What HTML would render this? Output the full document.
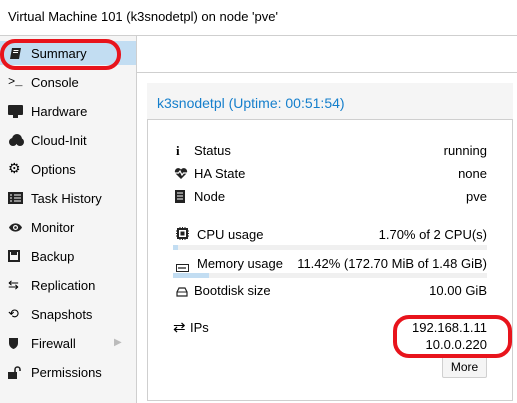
<!DOCTYPE html><html><head><style>
body{margin:0;width:517px;height:403px;overflow:hidden;background:#fff;font-family:"Liberation Sans",Arial,sans-serif;font-size:13px;color:#000;position:relative}
.a{position:absolute;white-space:nowrap}
.side{position:absolute;left:0;top:36px;width:136px;height:367px;background:#f5f5f5;border-right:1px solid #cfcfcf}
</style></head><body>
<div class="a" style="left:8px;top:9px;font-size:13px">Virtual Machine 101 (k3snodetpl) on node 'pve'</div>
<div class="a" style="left:0;top:35px;width:517px;height:1px;background:#cfcfcf"></div>
<div class="side">
<div class="a" style="left:0;top:5px;width:136px;height:24px;background:#c2ddf2"></div>
</div>
<div class="a" style="left:137px;top:72px;width:380px;height:1px;background:#cfcfcf"></div>
<div class="a" style="left:9px;top:47px;width:13px;height:13px"><svg width="13" height="13"><path d="M3 1h9l-2 11H1z" fill="#222"/><path d="M4.5 3.5h5M4 5.5h5" stroke="#fff"/></svg></div>
<div class="a" style="left:31px;top:46px">Summary</div>
<div class="a" style="left:8px;top:75px;font-size:12px;font-family:'Liberation Mono',monospace">&gt;_</div><div class="a" style="left:31px;top:75px">Console</div>
<div class="a" style="left:8px;top:105px;width:15px;height:12px"><svg width="15" height="13"><rect x="0" y="0" width="15" height="10" rx="1" fill="#222"/><rect x="5" y="10" width="5" height="3" fill="#222"/></svg></div><div class="a" style="left:31px;top:104px">Hardware</div>
<div class="a" style="left:8px;top:134px"><svg width="16" height="12"><circle cx="5" cy="8" r="4" fill="#222"/><circle cx="9" cy="5" r="5" fill="#222"/><circle cx="12" cy="8" r="4" fill="#222"/></svg></div><div class="a" style="left:31px;top:133px">Cloud-Init</div>
<div class="a" style="left:8px;top:160px;font-size:14px">⚙</div><div class="a" style="left:31px;top:162px">Options</div>
<div class="a" style="left:8px;top:192px"><svg width="15" height="12"><rect width="15" height="12" fill="#222"/><path d="M2 3h2M6 3h7M2 6h2M6 6h7M2 9h2M6 9h7" stroke="#fff"/></svg></div><div class="a" style="left:31px;top:191px">Task History</div>
<div class="a" style="left:8px;top:221px"><svg width="15" height="11"><path d="M1 5.5C4 0 11 0 14 5.5C11 11 4 11 1 5.5z" fill="#222"/><circle cx="7.5" cy="5.5" r="2.5" fill="#fff"/><circle cx="7.5" cy="5.5" r="1.3" fill="#222"/></svg></div><div class="a" style="left:31px;top:220px">Monitor</div>
<div class="a" style="left:8px;top:250px"><svg width="12" height="12"><rect x="1" y="1" width="10" height="10" fill="none" stroke="#222" stroke-width="2"/><rect x="3" y="1" width="6" height="4" fill="#222"/></svg></div><div class="a" style="left:31px;top:249px">Backup</div>
<div class="a" style="left:8px;top:277px;font-size:13px">⇆</div><div class="a" style="left:31px;top:278px">Replication</div>
<div class="a" style="left:8px;top:306px;font-size:13px">⟲</div><div class="a" style="left:31px;top:307px">Snapshots</div>
<div class="a" style="left:8px;top:337px"><svg width="11" height="13"><path d="M1 1h9v5c0 3-2 5-4.5 6C3 11 1 9 1 6z" fill="#222"/></svg></div><div class="a" style="left:31px;top:336px">Firewall</div>
<div class="a" style="left:114px;top:337px;color:#bbb;font-size:10px">▶</div>
<div class="a" style="left:8px;top:366px"><svg width="13" height="13"><rect x="0" y="6" width="9" height="7" fill="#222"/><path d="M7 6V3.5a2.5 2.5 0 0 1 5 0V5" fill="none" stroke="#222" stroke-width="1.6"/></svg></div><div class="a" style="left:31px;top:365px">Permissions</div>
<div class="a" style="left:0;top:39px;width:113px;height:23px;border:4px solid #e8141c;border-radius:15px"></div>

<div class="a" style="left:147px;top:83px;width:366px;height:37px;background:#f5f5f5"></div>
<div class="a" style="left:157px;top:95px;color:#157fcc;font-size:14px">k3snodetpl (Uptime: 00:51:54)</div>
<div class="a" style="left:147px;top:119px;width:364px;height:280px;border:1px solid #cfcfcf"></div>
<div class="a" style="left:176px;top:143px;font-weight:bold;font-family:'Liberation Serif',serif">i</div><div class="a" style="left:194px;top:143px">Status</div><div class="a" style="right:30px;top:143px">running</div>
<div class="a" style="left:174px;top:167px"><svg width="14" height="12"><path d="M7 12L1.5 6.5A3.2 3.2 0 0 1 7 2.5A3.2 3.2 0 0 1 12.5 6.5z" fill="#222"/><path d="M1 6h3.5l1.5-2 2 4 1.5-2H13" fill="none" stroke="#fff" stroke-width="1.2"/></svg></div><div class="a" style="left:194px;top:166px">HA State</div><div class="a" style="right:30px;top:166px">none</div>
<div class="a" style="left:175px;top:190px"><svg width="10" height="13"><rect width="10" height="13" fill="#222"/><path d="M2 3h6M2 6h6M2 9h6" stroke="#fff"/></svg></div><div class="a" style="left:194px;top:189px">Node</div><div class="a" style="right:30px;top:189px">pve</div>
<div class="a" style="left:176px;top:227px"><svg width="13" height="13"><rect x="2" y="2" width="9" height="9" fill="none" stroke="#222" stroke-width="2"/><rect x="4.5" y="4.5" width="4" height="4" fill="#222"/><path d="M4 0v2M6.5 0v2M9 0v2M4 11v2M6.5 11v2M9 11v2M0 4h2M0 6.5h2M0 9h2M11 4h2M11 6.5h2M11 9h2" stroke="#222"/></svg></div><div class="a" style="left:197px;top:227px">CPU usage</div><div class="a" style="right:30px;top:227px">1.70% of 2 CPU(s)</div>
<div class="a" style="left:173px;top:245px;width:314px;height:5px;background:#f0f0f0"></div><div class="a" style="left:173px;top:245px;width:5px;height:5px;background:#c2ddf2"></div>
<div class="a" style="left:176px;top:260px"><svg width="13" height="8"><rect x="0.5" y="0.5" width="12" height="7" fill="none" stroke="#222"/><path d="M3 3v2M5 3v2M7 3v2M9 3v2" stroke="#222" stroke-width="1.3"/></svg></div><div class="a" style="left:197px;top:256px">Memory usage</div><div class="a" style="right:30px;top:256px">11.42% (172.70 MiB of 1.48 GiB)</div>
<div class="a" style="left:173px;top:273px;width:314px;height:5px;background:#f0f0f0"></div><div class="a" style="left:173px;top:273px;width:36px;height:5px;background:#c2ddf2"></div>
<div class="a" style="left:176px;top:285px"><svg width="12" height="10"><path d="M1 5L3 1h6l2 4v4H1z" fill="none" stroke="#222" stroke-width="1.2"/><path d="M1 5h10" stroke="#222"/></svg></div><div class="a" style="left:194px;top:283px">Bootdisk size</div><div class="a" style="right:30px;top:283px">10.00 GiB</div>
<div class="a" style="left:173px;top:318px;font-size:15px">⇄</div><div class="a" style="left:190px;top:320px">IPs</div>
<div class="a" style="right:30px;top:320px">192.168.1.11</div><div class="a" style="right:30px;top:337px">10.0.0.220</div>
<div class="a" style="left:442px;top:356px;width:43px;height:20px;background:#f5f5f5;border:1px solid #d0d0d0;border-radius:2px;text-align:center;line-height:20px;font-size:12px">More</div>
<div class="a" style="left:393px;top:315px;width:111px;height:35px;border:4px solid #e8141c;border-radius:16px"></div>
</body></html>
